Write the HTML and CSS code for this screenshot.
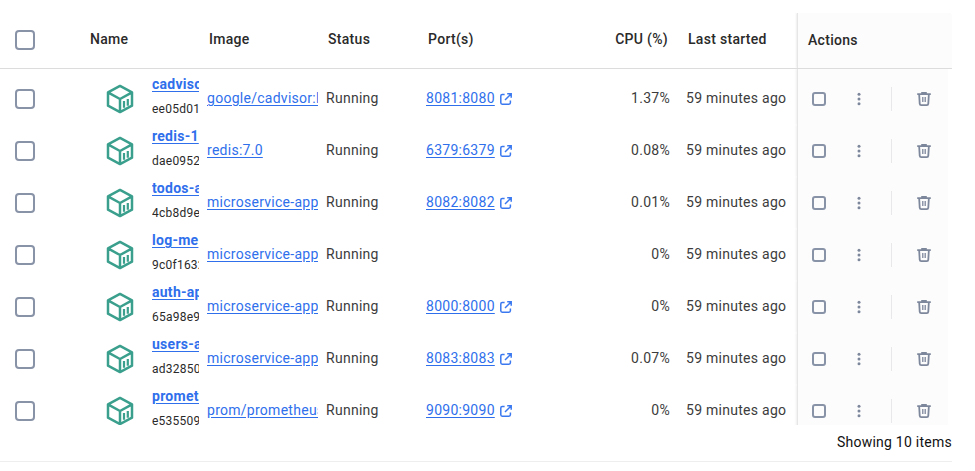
FILE: index.html
```
<!DOCTYPE html>
<html lang="en">
<head>
<meta charset="utf-8">
<title>Containers</title>
<link rel="stylesheet" href="styles.css">
</head>
<body>
<svg class="defs" width="0" height="0" aria-hidden="true">
  <symbol id="box" viewBox="0 0 28 30">
    <path d="M14 1.9 26 8.3V21.7L14 28.1 2 21.7V8.3Z M2.4 8.6 14 15 25.6 8.6 M14 15V28" fill="none" stroke="#3a9f8c" stroke-width="2.5" stroke-linejoin="round"/>
    <path d="M18 17V23.8 M21.8 15V21.8" fill="none" stroke="#3a9f8c" stroke-width="2.2"/>
  </symbol>
  <symbol id="open" viewBox="0 0 12 12">
    <path d="M4.6 1.6H2.2Q.8 1.6 .8 3V9.8Q.8 11.2 2.2 11.2H9Q10.4 11.2 10.4 9.8V7.4 M7.2 .8H11.2V4.8 M11 1 5 7" fill="none" stroke="#3a78f0" stroke-width="1.5"/>
  </symbol>
  <symbol id="dots" viewBox="0 0 4 14">
    <circle cx="2" cy="2.3" r="1.5"/><circle cx="2" cy="7" r="1.5"/><circle cx="2" cy="11.7" r="1.5"/>
  </symbol>
  <symbol id="trash" viewBox="0 0 14 14">
    <path d="M4.2 0H9.8V1.2H13.8V3.1H.2V1.2H4.2Z"/>
    <path d="M2.2 3 2.7 11.6Q2.8 13.1 4.2 13.1H9.8Q11.2 13.1 11.3 11.6L11.8 3" fill="none" stroke="currentColor" stroke-width="1.8"/>
    <path d="M5.8 5V10 M8.2 5V10" stroke="currentColor" stroke-width="1.3"/>
  </symbol>
</svg>
<main class="table">
  <header class="head grid">
    <span class="check"></span><span class="h-name">Name</span><span class="h-cell">Image</span><span class="h-cell">Status</span><span class="h-cell">Port(s)</span><span class="h-cpu">CPU (%)</span><span class="h-last">Last started</span><span class="h-actions">Actions</span>
  </header>
  <section class="body">
    <div class="row grid"><span class="check"></span><svg class="box"><use href="#box"/></svg><div class="name"><a>cadvisor</a><small>ee05d01</small></div><a class="image">google/cadvisor:l</a><span class="text">Running</span><span class="port"><a>8081:8080</a><svg><use href="#open"/></svg></span><span class="cpu">1.37%</span><span class="last">59 minutes ago</span><div class="actions"><i class="stop"></i><svg class="dots"><use href="#dots"/></svg><i class="sep"></i><svg class="trash"><use href="#trash"/></svg></div></div>
    <div class="row grid"><span class="check"></span><svg class="box"><use href="#box"/></svg><div class="name"><a>redis-1</a><small>dae0952</small></div><a class="image">redis:7.0</a><span class="text">Running</span><span class="port"><a>6379:6379</a><svg><use href="#open"/></svg></span><span class="cpu">0.08%</span><span class="last">59 minutes ago</span><div class="actions"><i class="stop"></i><svg class="dots"><use href="#dots"/></svg><i class="sep"></i><svg class="trash"><use href="#trash"/></svg></div></div>
    <div class="row grid"><span class="check"></span><svg class="box"><use href="#box"/></svg><div class="name"><a>todos-a</a><small>4cb8d9e</small></div><a class="image">microservice-app</a><span class="text">Running</span><span class="port"><a>8082:8082</a><svg><use href="#open"/></svg></span><span class="cpu">0.01%</span><span class="last">59 minutes ago</span><div class="actions"><i class="stop"></i><svg class="dots"><use href="#dots"/></svg><i class="sep"></i><svg class="trash"><use href="#trash"/></svg></div></div>
    <div class="row grid"><span class="check"></span><svg class="box"><use href="#box"/></svg><div class="name"><a>log-me</a><small>9c0f1632</small></div><a class="image">microservice-app</a><span class="text">Running</span><span class="port"></span><span class="cpu">0%</span><span class="last">59 minutes ago</span><div class="actions"><i class="stop"></i><svg class="dots"><use href="#dots"/></svg><i class="sep"></i><svg class="trash"><use href="#trash"/></svg></div></div>
    <div class="row grid"><span class="check"></span><svg class="box"><use href="#box"/></svg><div class="name"><a>auth-ap</a><small>65a98e9</small></div><a class="image">microservice-app</a><span class="text">Running</span><span class="port"><a>8000:8000</a><svg><use href="#open"/></svg></span><span class="cpu">0%</span><span class="last">59 minutes ago</span><div class="actions"><i class="stop"></i><svg class="dots"><use href="#dots"/></svg><i class="sep"></i><svg class="trash"><use href="#trash"/></svg></div></div>
    <div class="row grid"><span class="check"></span><svg class="box"><use href="#box"/></svg><div class="name"><a>users-a</a><small>ad32850</small></div><a class="image">microservice-app</a><span class="text">Running</span><span class="port"><a>8083:8083</a><svg><use href="#open"/></svg></span><span class="cpu">0.07%</span><span class="last">59 minutes ago</span><div class="actions"><i class="stop"></i><svg class="dots"><use href="#dots"/></svg><i class="sep"></i><svg class="trash"><use href="#trash"/></svg></div></div>
    <div class="row grid"><span class="check"></span><svg class="box"><use href="#box"/></svg><div class="name"><a>prometh</a><small>e535509</small></div><a class="image">prom/prometheus</a><span class="text">Running</span><span class="port"><a>9090:9090</a><svg><use href="#open"/></svg></span><span class="cpu">0%</span><span class="last">59 minutes ago</span><div class="actions"><i class="stop"></i><svg class="dots"><use href="#dots"/></svg><i class="sep"></i><svg class="trash"><use href="#trash"/></svg></div></div>
  </section>
  <footer class="foot">Showing 10 items</footer>
</main>
</body>
</html>
```
FILE: styles.css
```
* { box-sizing: border-box; }
body { margin: 0; background: #fff; font: 14px/20px Roboto, sans-serif; letter-spacing: 0.27px; color: #3c3c3c; overflow: hidden; }
.defs { display: block; height: 0; }
.table { width: 952px; padding-top: 12px; }
.grid {
  display: grid;
  grid-template-columns: 50px 102px 55px 119px 100px 130px 114px 127px 1fr;
  align-items: center;
}
.grid > * { min-width: 0; white-space: nowrap; }
.head { height: 57px; border-bottom: 1px solid #dcdcdc; font-weight: 500; color: #2a2a2a; letter-spacing: 0.3px; }
.check { width: 20px; height: 20px; margin-left: 15px; border: 2px solid #8993a8; border-radius: 4px; }
.h-name { grid-column: 2 / 4; padding-left: 40px; margin-top: -2px; }
.h-cell { padding-left: 2px; margin-top: -2px; }
.h-cpu { text-align: right; padding-right: 2px; margin-top: -2px; }
.h-last { padding-left: 18px; margin-top: -2px; }
.h-actions {
  height: 55px; margin-top: 1px; padding: 17px 0 0 10px;
  background: #fcfcfc; border-left: 1px solid #e6e6e6; border-top-right-radius: 4px;
  box-shadow: -1px 0 2px #00000012; clip-path: inset(0 0 0 -4px);
}
.body { height: 356px; overflow: hidden; background: linear-gradient(#fcfcfc, #fcfcfc) 797px 0 / 151px 100% no-repeat; }
.row { height: 52px; }
.row:first-child { height: 56px; padding-top: 4px; }
.row:first-child .actions { height: 56px; margin-top: -4px; padding-top: 4px; }
.box { width: 28px; height: 30px; margin-left: 56px; display: block; }
.name { overflow: hidden; height: 52px; width: 47px; }
.name a { display: block; font-weight: 700; line-height: 20px; margin-top: 1px; }
.name small { display: block; font-size: 12px; line-height: 20px; margin-top: 4px; padding-top: 1px; color: #2a2a2a; letter-spacing: 0.24px; }
a { color: #2f6fec; text-decoration: underline; text-underline-offset: 2px; }
.image { overflow: hidden; width: 111px; }
.image, .text, .cpu, .last { margin-top: -2px; }
.port { display: flex; align-items: center; gap: 5px; }
.port a { margin-top: -2px; }
.port svg { width: 12px; height: 12px; }
.cpu { text-align: right; }
.last { padding-left: 16px; }
.actions { height: 52px; display: flex; align-items: center; color: #7d879c; fill: currentColor; border-left: 1px solid #e6e6e6; box-shadow: -1px 0 2px #00000012; clip-path: inset(0 0 0 -4px); }
.stop { width: 14px; height: 14px; margin-left: 14px; border: 2px solid #8993a8; border-radius: 3px; }
.dots { width: 4px; height: 14px; margin-left: 31px; }
.sep { width: 1px; height: 24px; margin-left: 30px; background: #e8e8ea; }
.trash { width: 14px; height: 14px; margin-left: 25px; }
.foot { height: 37px; padding-top: 7px; text-align: right; border-bottom: 1px solid #eee; color: #111; letter-spacing: 0.25px; }
```
